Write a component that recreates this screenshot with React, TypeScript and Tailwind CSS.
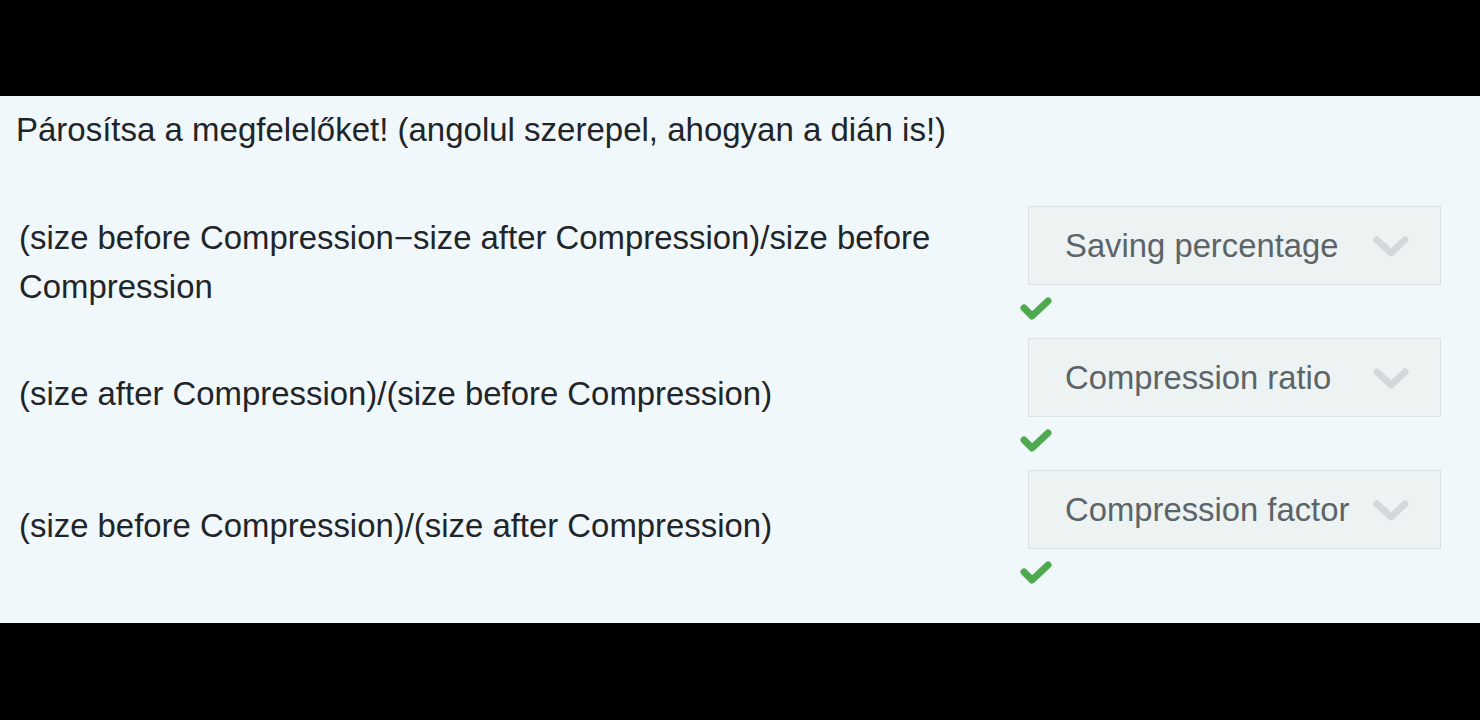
import React from 'react';

const rows = [
  {
    text: '(size before Compression\u2212size after Compression)/size before Compression',
    answer: 'Saving percentage',
  },
  { text: '(size after Compression)/(size before Compression)', answer: 'Compression ratio' },
  { text: '(size before Compression)/(size after Compression)', answer: 'Compression factor' },
];

const Chevron = () => (
  <svg width="36" height="26" viewBox="0 0 36 26" className="mt-[3px] shrink-0">
    <path d="M4 6 L18 19 L32 6" fill="none" stroke="#d3d8da" strokeWidth="7" strokeLinecap="round" strokeLinejoin="round" />
  </svg>
);

const Check = () => (
  <svg width="32" height="26" viewBox="0 0 32 26">
    <path d="M4 13 L12 21 L28 6" fill="none" stroke="#4fa94f" strokeWidth="7" strokeLinecap="round" strokeLinejoin="round" />
  </svg>
);

const App = () => {
  return (
    <div className="flex h-[720px] w-[1480px] flex-col bg-black font-['Liberation_Sans',Arial,sans-serif]">
      <div className="h-[96px] shrink-0" />
      <div className="h-[527px] shrink-0 bg-[#f0f8fb] pl-4 pr-[39px] pt-[9px] text-[#1f2528]">
        <p className="text-[33px] leading-[49px]">Párosítsa a megfelelőket! (angolul szerepel, ahogyan a dián is!)</p>
        <div className="mt-[52px] flex flex-col gap-[21px]">
          {rows.map((row) => (
            <div className="flex items-center" key={row.answer}>
              <p className="w-[1004px] pl-[3px] pr-[70px] text-[32.9px] leading-[49px]">{row.text}</p>
              <div className="flex flex-1 flex-col">
                <div className="ml-2 flex h-[79px] items-center justify-between border border-[#dbe0e2] bg-[#edf2f3] pl-[36px] pr-[31px]">
                  <span className="text-[32.8px] text-[#5c6468]">{row.answer}</span>
                  <Chevron />
                </div>
                <div className="-mb-[4px] flex h-[36px] items-end">
                  <Check />
                </div>
              </div>
            </div>
          ))}
        </div>
      </div>
      <div className="flex-1" />
    </div>
  );
};

export default App;
